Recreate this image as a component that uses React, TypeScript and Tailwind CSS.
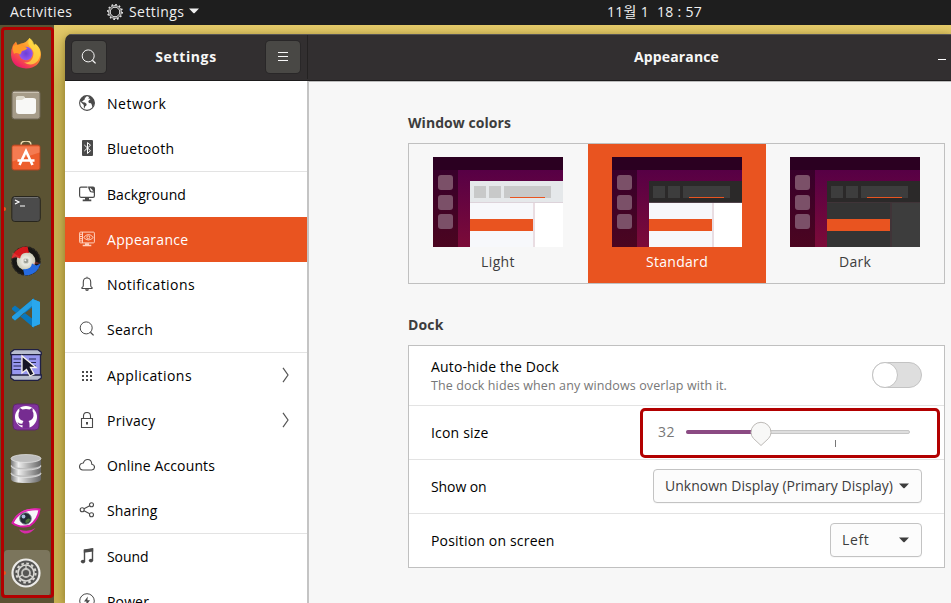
import React, { useLayoutEffect, useRef, useState } from "react";

// Text whose letter spacing is tuned so that it fills a given width.
function Fit({ text, w, className = "" }: { text: string; w: number; className?: string }) {
  const ref = useRef<HTMLSpanElement>(null);
  const [spacing, setSpacing] = useState(0);
  useLayoutEffect(() => {
    const natural = ref.current!.getBoundingClientRect().width;
    setSpacing((w - natural) / text.length);
  }, [text, w]);
  return (
    <span ref={ref} className={`inline-block shrink-0 whitespace-pre ${className}`} style={{ letterSpacing: spacing }}>
      {text}
    </span>
  );
}

const line = { fill: "none", stroke: "currentColor", strokeWidth: 1 };

function Icon({ children, size = 16 }: { children: React.ReactNode; size?: number }) {
  return (
    <svg width={size} height={size} viewBox="0 0 16 16" className="shrink-0">
      {children}
    </svg>
  );
}

const searchShape = (
  <g {...line}>
    <circle cx="7.2" cy="6.9" r="6" />
    <path d="M11.400 11.200 14.600 14.400" strokeWidth="1.3" />
  </g>
);

const icons: Record<string, React.ReactNode> = {
  Network: (
    <>
      <circle cx="8" cy="8" r="7.4" {...line} strokeWidth="1.1" />
      <path d="M1 6 2 3.5 4.5 1.5 7.5.8 7 2.3 5.5 3 6.2 4 4.6 5.2 3.7 6.200 2.500 6.500 4 7.300 6 7.600 7.7 9 7.2 10.7 6 11.6 5.5 13.8 4.8 12.2 4.800 10 3 8.300ZM9 1.1 12 1.6 14.7 4.5 15.4 8 14.4 11.5 13.200 12 12.800 9.7 12 8.300 10 8 9.300 6.7 10 5 11.4 4.4 10.5 3.6 9.3 3.7 10 2.3Z" fill="currentColor" />
    </>
  ),
  Bluetooth: (
    <>
      <rect x="3" y="0" width="11" height="16" rx="1" fill="currentColor" />
      <path d="m5.300 5 6.200 5.700L8.500 13.500v-11L11.500 5.200 5.300 11" fill="none" stroke="#fff" strokeWidth="1" />
    </>
  ),
  Background: (
    <>
      <path d="M8.500 1.100H2Q.6 1.100.6 2.400v7.200Q.6 11.400 2 11.400h12q1.400 0 1.400-1.400V6.500" {...line} strokeWidth="1.200" />
      <path d="M9 .5h5q2 0 2 2v5q-.8-1-2.800-1L11 6l-.8-1.800Q9.200 2.500 9 .5Z" fill="currentColor" />
      <path d="M10.800 1.500q.2 2.800 1.700 3.900 1.500-.3 2.300.5L13 3.500Z" fill="#fff" />
      <path d="M6 12h4v1.500h2.300v1.700H3.700v-1.700H6Z" fill="currentColor" />
    </>
  ),
  Appearance: (
    <>
      <g {...line}>
        <rect x=".6" y="1.1" width="14.8" height="10.800" rx="1" />
        <path d="M3.5 1v11M1 3.300h2M1 5.500h2M1 7.700h2M1 9.900h2M4.700 6.500Q9.500.5 14.300 6.500 9.500 11.500 4.700 6.500Z" />
        <circle cx="9.3" cy="6.300" r="1.500" />
      </g>
      <path d="M6 12.200h4v1.500h2.300V15.200H3.700v-1.500H6Z" fill="currentColor" />
    </>
  ),
  Notifications: (
    <>
      <path d="M3 12.5h10v-1q-1.3-.5-1.300-2V6Q11.700 2 8 2T4.300 6v3.500q0 1.500-1.300 2ZM8 .8V2" {...line} strokeWidth="1.100" />
      <path d="M6 13.200h4q-.3 1.700-2 1.700T6 13.200Z" fill="currentColor" />
    </>
  ),
  Search: searchShape,
  Applications: (
    <g fill="currentColor" shapeRendering="crispEdges">
      {[4, 8, 12].map((y) => [3, 7, 11].map((x) => <rect key={`${x}-${y}`} x={x} y={y} width="2" height="2" />))}
    </g>
  ),
  Privacy: (
    <>
      <path d="M2.500 6.500h11v9h-11ZM4.500 6.500V4Q4.500.500 8 .500T11.500 4v2.500" {...line} strokeWidth="1.100" />
      <rect x="7" y="10" width="2" height="2.500" fill="currentColor" />
    </>
  ),
  "Online Accounts": <path d="M3.700 13h9q2.800-.3 2.800-3 0-2.200-2.700-2.800Q12.500 2.500 8.600 2.500 5.500 2.500 4.300 6 .5 6.500.5 9.700.7 12.700 3.700 13Z" {...line} strokeWidth="1.100" />,
  Sharing: (
    <g {...line} strokeWidth="1.100">
      <circle cx="3.200" cy="7.800" r="2" />
      <circle cx="12.500" cy="2.800" r="2" />
      <circle cx="12.500" cy="12.800" r="2" />
      <path d="m5 6.800 5.700-3M5 8.800l5.700 3" />
    </g>
  ),
  Sound: (
    <>
      <path d="M5.500 13V2l8-1.200V12" {...line} strokeWidth="1.400" />
      <path d="M4.800 1.700 14.200.4v3.200L4.800 4.700Z" fill="currentColor" />
      <ellipse cx="4" cy="13.600" rx="2.200" ry="1.800" fill="currentColor" />
      <ellipse cx="12" cy="12.600" rx="2.200" ry="1.800" fill="currentColor" />
    </>
  ),
  Power: (
    <>
      <circle cx="8" cy="8" r="7.300" {...line} />
      <path d="M8.800 3.500 5 8.500h2.500L7 12.500l4-5.200H8.400Z" fill="currentColor" />
    </>
  ),
};

const menu: { name: string; w: number; arrow?: boolean; rule?: boolean }[] = [
  { name: "Network", w: 59.5 },
  { name: "Bluetooth", w: 67.5, rule: true },
  { name: "Background", w: 79 },
  { name: "Appearance", w: 81.5 },
  { name: "Notifications", w: 88 },
  { name: "Search", w: 46, rule: true },
  { name: "Applications", w: 85, arrow: true },
  { name: "Privacy", w: 48.5, arrow: true },
  { name: "Online Accounts", w: 108 },
  { name: "Sharing", w: 50.5, rule: true },
  { name: "Sound", w: 41.5 },
  { name: "Power", w: 42 },
];

const dockArt: React.ReactNode[] = [
  <>
    <path d="M3 8 6 4.500 7.500 8 11 6.500Q16 6 19.500 1q3 3 3.500 6l2 1.500.5-1.700Q31 11 31 18q-1 13-15 13.500Q1.800 30.500 1 18q-.3-5 2-10Z" fill="url(#fox)" />
    <path d="M19.500 1q-2.700 5 .5 9 5 4 3 10-2 6-9 5.500 8 5 14-2 3-5 2-9-1-5-5-8l-1 1.500Q24 4 19.500 1Z" fill="#ffdf45" opacity=".75" />
    <circle cx="16" cy="16.500" r="6.800" fill="url(#violet)" />
    <path d="M3 9q6-3 12.500 1l2 1.500q-3 2-5.500 2.500l-1.700 3.500Q6 15 4 17Q2 13 3 9Z" fill="#ff9b28" />
  </>,
  <>
    <rect x="2" y="2" width="28" height="28" rx="2.500" fill="#a69c89" stroke="#706858" />
    <path d="M3 3.500h26" stroke="#cac2b3" />
    <path d="M6 10q0-2.500 2-2.500h5q2 0 2 1.500h8q3 0 3 2v11q0 3-3 3H9q-3 0-3-3Z" fill="#f8f8f6" />
    <path d="M6 11V9q0-2 2-2h5q1.500 0 2 2l-3 2Z" fill="#dedacd" />
  </>,
  <>
    <path d="M11 7V4q0-4 5-4t5 4v3" fill="none" stroke="#ead9ae" strokeWidth="1.500" />
    <rect x="2" y="4" width="28" height="25" rx="2" fill="#ed5e2d" stroke="#a94724" />
    <path d="M2.500 5.500h27v6l-27 9Z" fill="#f47b51" />
    <path d="m9.500 24 6.500-14 6.500 14M7.500 19.500h17" fill="none" stroke="#fff" strokeWidth="2.600" />
  </>,
  <>
    <rect x="1.800" y="3.500" width="28.500" height="25" rx="3" fill="#4b4b4b" stroke="#28261d" />
    <path d="M4 4.500h24" stroke="#737373" />
    <path d="m5 7 4 2-4 2M10 13h5" fill="none" stroke="#fff" strokeWidth="1.200" />
  </>,
  <>
    <circle cx="16" cy="16" r="14" fill="#171715" stroke="#25231f" strokeWidth="1.500" strokeDasharray="3 1" />
    <circle cx="16" cy="16" r="9.300" fill="url(#silver)" />
    <circle cx="16" cy="16" r="2.800" fill="#9c9f96" stroke="#d9dad0" />
    <circle cx="15.300" cy="15.300" r="1" fill="#eee" />
    <path d="M1.500 13.500Q5 1.500 17.500 1.500L19 8Q11 7 10 13.500L5.500 11.500Z" fill="#d5191d" />
    <path d="M30.500 18.500Q27 30.500 14.500 30.500L13 24Q21 25 22 18.500L26.500 20.500Z" fill="#266be0" />
    <path d="m1.500 13.500 1-6L11 12.500ZM30.500 18.500l-8 1 3-3Z" fill="#ff5c58" opacity=".35" />
  </>,
  <>
    <path d="M2 11 5 8.500 24 23V31L2 12.500ZM2 21 5 23.500 24 9V1L2 19.500Z" fill="#0877bd" />
    <path d="m23 2 7 3v22l-7 3-1-1V9L5 23.500 2 21V19.500Z" fill="#249ee2" />
    <path d="m22 2 8 3v22l-8 3Z" fill="#29a7ed" />
  </>,
  <>
    <path d="M1.500 5h29v22h-29Z" fill="#9797f0" stroke="#202044" strokeWidth="1.300" />
    <path d="M4 .7h24l3.300 2.500v2.500H.7V3.200ZM.7 26h30.600v3L28 31.300H4L.7 29Z" fill="#b8bdcf" stroke="#202044" strokeWidth="1.300" />
    <path d="M3.500 10h8M3.500 13.500h7M3.500 17h8M3.500 20.500h7M19 10h7M21 13.500h5M23 17h3" stroke="#252552" strokeWidth="1.200" />
    <path d="M12 7v17l4.500-3.500L20 27l4-2-3.500-6.500H26Z" fill="#161528" stroke="#f6f3ed" strokeWidth="1.300" />
  </>,
  <>
    <rect x="3" y="3" width="26" height="26" rx="4" fill="#81329c" stroke="#5e286c" />
    <circle cx="16" cy="16" r="11" fill="#fff" />
    <path d="M9.500 10q-.6-3 .5-3l2.500 1.500q3.500-.8 7 0L22 7q1 0 .5 3 1.500 2 1 5-.5 4-5 5 1 1 1 3v4h-7V24q-4 1-5-3 2 2.500 5 1.500 0-1.500 1-2.500-4.500-1-5-5-.5-3 1-5Z" fill="#762c91" />
  </>,
  <>
    {[21.5, 14, 6.5].map((y) => (
      <g key={y}>
        <path d={`M1 ${y - 1}v5.500q0 4 15 4t15-4v-5.500Z`} fill="url(#metal)" />
        <ellipse cx="16" cy={y - 1} rx="15" ry="4" fill="#bdbdbd" stroke="#e6e6e6" strokeWidth=".7" />
      </g>
    ))}
  </>,
  <>
    <path d="M2.500 18Q10 3 29.500 4.500 28 15 20 20.500 10 23.500 2.500 18Z" fill="#f6f6fa" stroke="#d91ba8" strokeWidth="2" />
    <path d="M2.500 16Q11 1 30.500 4 20 4.500 13 7 6 10.500 2.500 16Z" fill="#ed35be" />
    <circle cx="15.500" cy="13.500" r="5.800" fill="#222d35" stroke="#7d8a94" />
    <circle cx="13.500" cy="11.500" r="1.900" fill="#a6bedb" />
    <path d="M15.500 15.500q3.500-3.500 4.500-1-.5 3.500-4.500 3.500Z" fill="#4b783e" />
    <path d="M9 24.500q10 3 16.500-1.500-5 6-11 5.500-4-1-5.500-4Z" fill="#d72baa" />
  </>,
  <>
    <circle cx="16" cy="16" r="13.500" fill="#565654" stroke="#ebeae7" strokeWidth="2.200" />
    <circle cx="16" cy="16" r="9.600" fill="none" stroke="#dad9d4" strokeWidth="2" strokeDasharray="2.600 2.427" />
    <circle cx="16" cy="16" r="8" fill="#565654" stroke="#dad9d4" strokeWidth="1.600" />
    <circle cx="16" cy="16" r="4" fill="none" stroke="#c5c4c0" strokeWidth="1.800" />
    <path d="m16 12 0-4m3.500 10 3.500 2m-10.500-2-3.500 2" stroke="#dad9d4" strokeWidth="1.200" />
  </>,
];

function Dock() {
  return (
    <aside className="relative h-full w-[54px] shrink-0 bg-[#5b5333] pt-[2px]">
      <svg width="0" height="0" className="absolute">
        <defs>
          <linearGradient id="fox" x1="1" y1="0" x2=".3" y2="1"><stop stopColor="#fff04d" /><stop offset=".5" stopColor="#ff8a27" /><stop offset="1" stopColor="#ed176c" /></linearGradient>
          <radialGradient id="violet"><stop stopColor="#6b3fd6" /><stop offset="1" stopColor="#9457ef" /></radialGradient>
          <radialGradient id="silver"><stop stopColor="#fff" /><stop offset="1" stopColor="#c9c8b4" /></radialGradient>
          <linearGradient id="metal"><stop stopColor="#777" /><stop offset=".25" stopColor="#eee" /><stop offset=".55" stopColor="#b5b5b5" /><stop offset="1" stopColor="#666" /></linearGradient>
        </defs>
      </svg>
      {dockArt.map((art, i) => (
        <div key={i} className="flex h-[52px] w-full items-center pl-1">
          <div className={`relative flex h-[46px] w-[46px] items-center justify-center rounded ${i === 10 ? "bg-[#7b755c]" : ""}`}>
            {(i === 3 || i === 10) && <span className="absolute top-[21px] left-0 h-1 w-[2px] rounded-r-full bg-[#e95420]" />}
            <svg width="32" height="32" viewBox="0 0 32 32" className="-translate-x-px">{art}</svg>
          </div>
        </div>
      ))}
      <div className="absolute top-[2px] left-[1px] h-[571px] w-[53px] rounded-[4px] border-[3px] border-[#b20000]" />
    </aside>
  );
}

const themes = [
  { name: "Light", w: 34, cell: "w-[179px]", label: "text-[#3d3d3d]", head: "#e5e8ea", item: "#c8c9c9", side: "#f7f8fb", main: "#ffffff", rule: "#ddd3da", split: "#e9dde2" },
  { name: "Standard", w: 62, cell: "w-[178px] bg-[#e95420]", label: "text-white", head: "#2b2929", item: "#3d3d3d", side: "#f7f8fb", main: "#ffffff", rule: "#50434b", split: "#e9dde2" },
  { name: "Dark", w: 32, cell: "w-[178px]", label: "text-[#3d3d3d]", head: "#2b2929", item: "#3d3d3d", side: "#343434", main: "#3d3d3d", rule: "#403438", split: "#403438" },
];

function Thumb({ t }: { t: (typeof themes)[number] }) {
  return (
    <svg width="130" height="90" viewBox="0 0 130 90" shapeRendering="crispEdges" className="shrink-0">
      <defs>
        <linearGradient id="wall" x1="0" y1="0" x2="0" y2="1"><stop stopColor="#570045" /><stop offset="1" stopColor="#7c0b38" /></linearGradient>
        <linearGradient id="bar" x1="0" y1="0" x2="0" y2="1"><stop stopColor="#38002b" /><stop offset="1" stopColor="#4b0520" /></linearGradient>
      </defs>
      <rect width="130" height="13" fill="#2b0021" />
      <rect y="13" width="130" height="77" fill="url(#wall)" />
      <rect y="13" width="25" height="77" fill="url(#bar)" />
      {[18, 38, 57].map((y) => <rect key={y} x="5" y={y} width="15" height="15" rx="3" fill="#7b5068" shapeRendering="auto" />)}
      <rect x="37" y="24" width="93" height="21" fill={t.head} />
      <rect x="37" y="45" width="93" height="1" fill={t.rule} />
      <rect x="41" y="29" width="12" height="12" fill={t.item} />
      <rect x="56" y="29" width="12" height="12" fill={t.item} />
      <rect x="71" y="29" width="47" height="12" fill={t.item} />
      <rect x="77" y="40" width="35" height="1" fill="#e95420" />
      <rect x="37" y="46" width="63" height="44" fill={t.side} />
      <rect x="100" y="46" width="2" height="44" fill={t.split} />
      <rect x="102" y="46" width="28" height="44" fill={t.main} />
      <rect x="37" y="62" width="63" height="12" fill="#e95420" />
    </svg>
  );
}

function Caret() {
  return <svg width="10" height="6" viewBox="0 0 10 6" className="shrink-0"><path d="M0 .5h10L5.700 5q-.7.700-1.400 0Z" fill="currentColor" /></svg>;
}

const combo = "mb-[2px] flex h-[34px] items-center justify-between rounded border border-[#c3c3c3] bg-[#fcfcfc] pr-3 pl-[11px] text-[#3d3d3d] shadow-[0_1px_1px_#00000008]";

export default function App() {
  return (
    <div className="flex h-[603px] w-[951px] flex-col overflow-hidden bg-[#dac35f] font-['Open_Sans','Noto_Sans_CJK_KR',sans-serif] text-[14px] leading-5 text-black">
      <header className="flex h-[25px] shrink-0 items-center bg-[#1e1e1e] pb-[2px] pl-[10px] text-[#f0f0f0]">
        <Fit text="Activities" w={62.5} />
        <svg width="16" height="16" viewBox="0 0 16 16" className="ml-[34.5px] shrink-0">
          <g fill="none" stroke="currentColor">
            <circle cx="8" cy="8" r="6.300" />
            <circle cx="8" cy="8" r="4.800" />
            <circle cx="8" cy="8" r="7.300" strokeWidth="1.300" strokeDasharray="1.700 2.120" />
          </g>
        </svg>
        <Fit text="Settings" w={55.5} className="ml-[6px]" />
        <span className="mb-[2px] ml-[4.500px] flex"><Caret /></span>
        <Fit text="11월 1  18 : 57" w={95} className="ml-[408px]" />
      </header>

      <div className="flex min-h-0 flex-1">
        <Dock />
        <div className="min-w-0 flex-1 bg-linear-to-b from-[#e4ca69] to-[#c7b152] to-[60px] pt-[9px] pl-[11px]">
          <div className="flex h-[569px] w-[886px] flex-col overflow-hidden rounded-tl-[7px] shadow-[0_2px_10px_#55440088]">
            <div className="flex h-[47px] shrink-0 border-t border-b border-t-[#575555] border-b-[#1d1b1c] bg-[#322f30] pb-px font-bold text-[#f7f7f7]">
              <div className="flex w-[243px] shrink-0 items-center justify-between border-r border-[#242222] pr-[7px] pl-[7px]">
                <button className="flex h-8 w-[34px] items-center justify-center rounded bg-[#494845] shadow-[0_0_0_1px_#292728]">
                  <Icon>{searchShape}</Icon>
                </button>
                <Fit text="Settings" w={61.5} className="mb-px" />
                <button className="flex h-8 w-[34px] items-center justify-center rounded bg-[#494845] shadow-[0_0_0_1px_#292728]">
                  <svg width="10" height="10" viewBox="0 0 10 10"><path d="M0 .5h10M0 4.500h10M0 8.500h10" stroke="currentColor" /></svg>
                </button>
              </div>
              <div className="flex flex-1 items-center pl-[326px]">
                <Fit text="Appearance" w={85} className="mb-px" />
                <span className="mt-[5px] ml-[219px] h-px w-2 bg-white" />
              </div>
            </div>

            <div className="flex min-h-0 flex-1">
              <nav className="w-[242px] shrink-0 overflow-hidden bg-white">
                {menu.map((m) => (
                  <div key={m.name} className={`flex items-center pl-[14px] ${m.rule ? "h-[46px] border-b border-[#e3e3e3]" : "h-[45px]"} ${m.name === "Appearance" ? "bg-[#e95420] text-white" : ""}`}>
                    <span className={`mr-3 -mt-px ${m.name === "Appearance" ? "text-[#ffd0bd]" : "text-[#4a4a4a]"}`}><Icon>{icons[m.name]}</Icon></span>
                    <Fit text={m.name} w={m.w} />
                    {m.arrow && (
                      <svg width="8" height="16" viewBox="0 0 8 16" className="mr-[17px] mb-px ml-auto text-[#555]"><path d="m1 .8 5 7.200-5 7.200" {...line} strokeWidth="1.200" /></svg>
                    )}
                  </div>
                ))}
              </nav>
              <div className="w-[2px] shrink-0 bg-[#c4c4c4]" />
              <main className="flex-1 border-t border-[#bcbcbc] bg-[#f7f7f7] pt-[31px] pl-[99px]">
                <h2 className="flex h-5 font-bold text-[#3d3d3d]"><Fit text="Window colors" w={103} /></h2>
                <div className="mt-[10px] flex h-[141px] w-[537px] border border-[#c0c0c0]">
                  {themes.map((t) => (
                    <div key={t.name} className={`flex flex-col pt-[13px] pl-6 ${t.cell}`}>
                      <Thumb t={t} />
                      <div className={`mt-[5px] w-[130px] text-center ${t.label}`}><Fit text={t.name} w={t.w} /></div>
                    </div>
                  ))}
                </div>
                <h2 className="mt-[31px] flex h-5 font-bold text-[#3d3d3d]"><Fit text="Dock" w={35.5} /></h2>
                <div className="mt-[10px] w-[537px] border border-[#c0c0c0] bg-white">
                  <div className="flex h-[60px] items-center justify-between border-b border-[#e3e3e3] pr-[22px] pl-[22px]">
                    <div className="flex flex-col">
                      <Fit text="Auto-hide the Dock" w={128} className="self-start" />
                      <Fit text="The dock hides when any windows overlap with it." w={296} className="self-start text-[12.500px] leading-[17px] text-[#777]" />
                    </div>
                    <div className="mb-px h-[26px] w-[50px] rounded-full border border-[#c3c3c3] bg-[#dedede]">
                      <div className="-mt-px -ml-px h-[26px] w-[26px] rounded-full border border-[#c3c3c3] bg-white" />
                    </div>
                  </div>
                  <div className="relative flex h-[54px] items-center border-b border-[#e3e3e3] pl-[22px]">
                    <Fit text="Icon size" w={57.5} />
                    <Fit text="32" w={17} className="mb-[2px] ml-[169.500px] text-[#777]" />
                    <div className="relative mb-[2px] ml-[11px] flex h-1 w-[224px] rounded-full border border-[#c6c6c6] bg-[#dedede]">
                      <div className="-my-px -ml-px h-1 w-[75px] rounded-l-full bg-[#8b4a83]" />
                      <svg width="22" height="26" viewBox="0 0 22 26" className="absolute -top-[10px] left-[63px]">
                        <path d="M11 24.500 3.500 17.500Q1 15 1 11.300A10 10 0 0 1 21 11.300Q21 15 18.500 17.500Z" fill="#f8f8f7" stroke="#bdbab7" />
                      </svg>
                      <span className="absolute top-[9px] left-[148px] h-[7px] w-px bg-[#777]" />
                    </div>
                    <div className="absolute top-[2px] left-[231px] h-[50px] w-[300px] rounded-[5px] border-[3px] border-[#b20000]" />
                  </div>
                  <div className="flex h-[54px] items-center justify-between border-b border-[#e3e3e3] pr-[22px] pl-[22px]">
                    <Fit text="Show on" w={55.5} />
                    <div className={`w-[269px] ${combo}`}><Fit text="Unknown Display (Primary Display)" w={228} /><Caret /></div>
                  </div>
                  <div className="flex h-[53px] items-center justify-between pr-[22px] pl-[22px]">
                    <Fit text="Position on screen" w={123.5} />
                    <div className={`w-[92px] ${combo}`}><Fit text="Left" w={27.5} /><Caret /></div>
                  </div>
                </div>
              </main>
            </div>
          </div>
        </div>
      </div>
    </div>
  );
}
